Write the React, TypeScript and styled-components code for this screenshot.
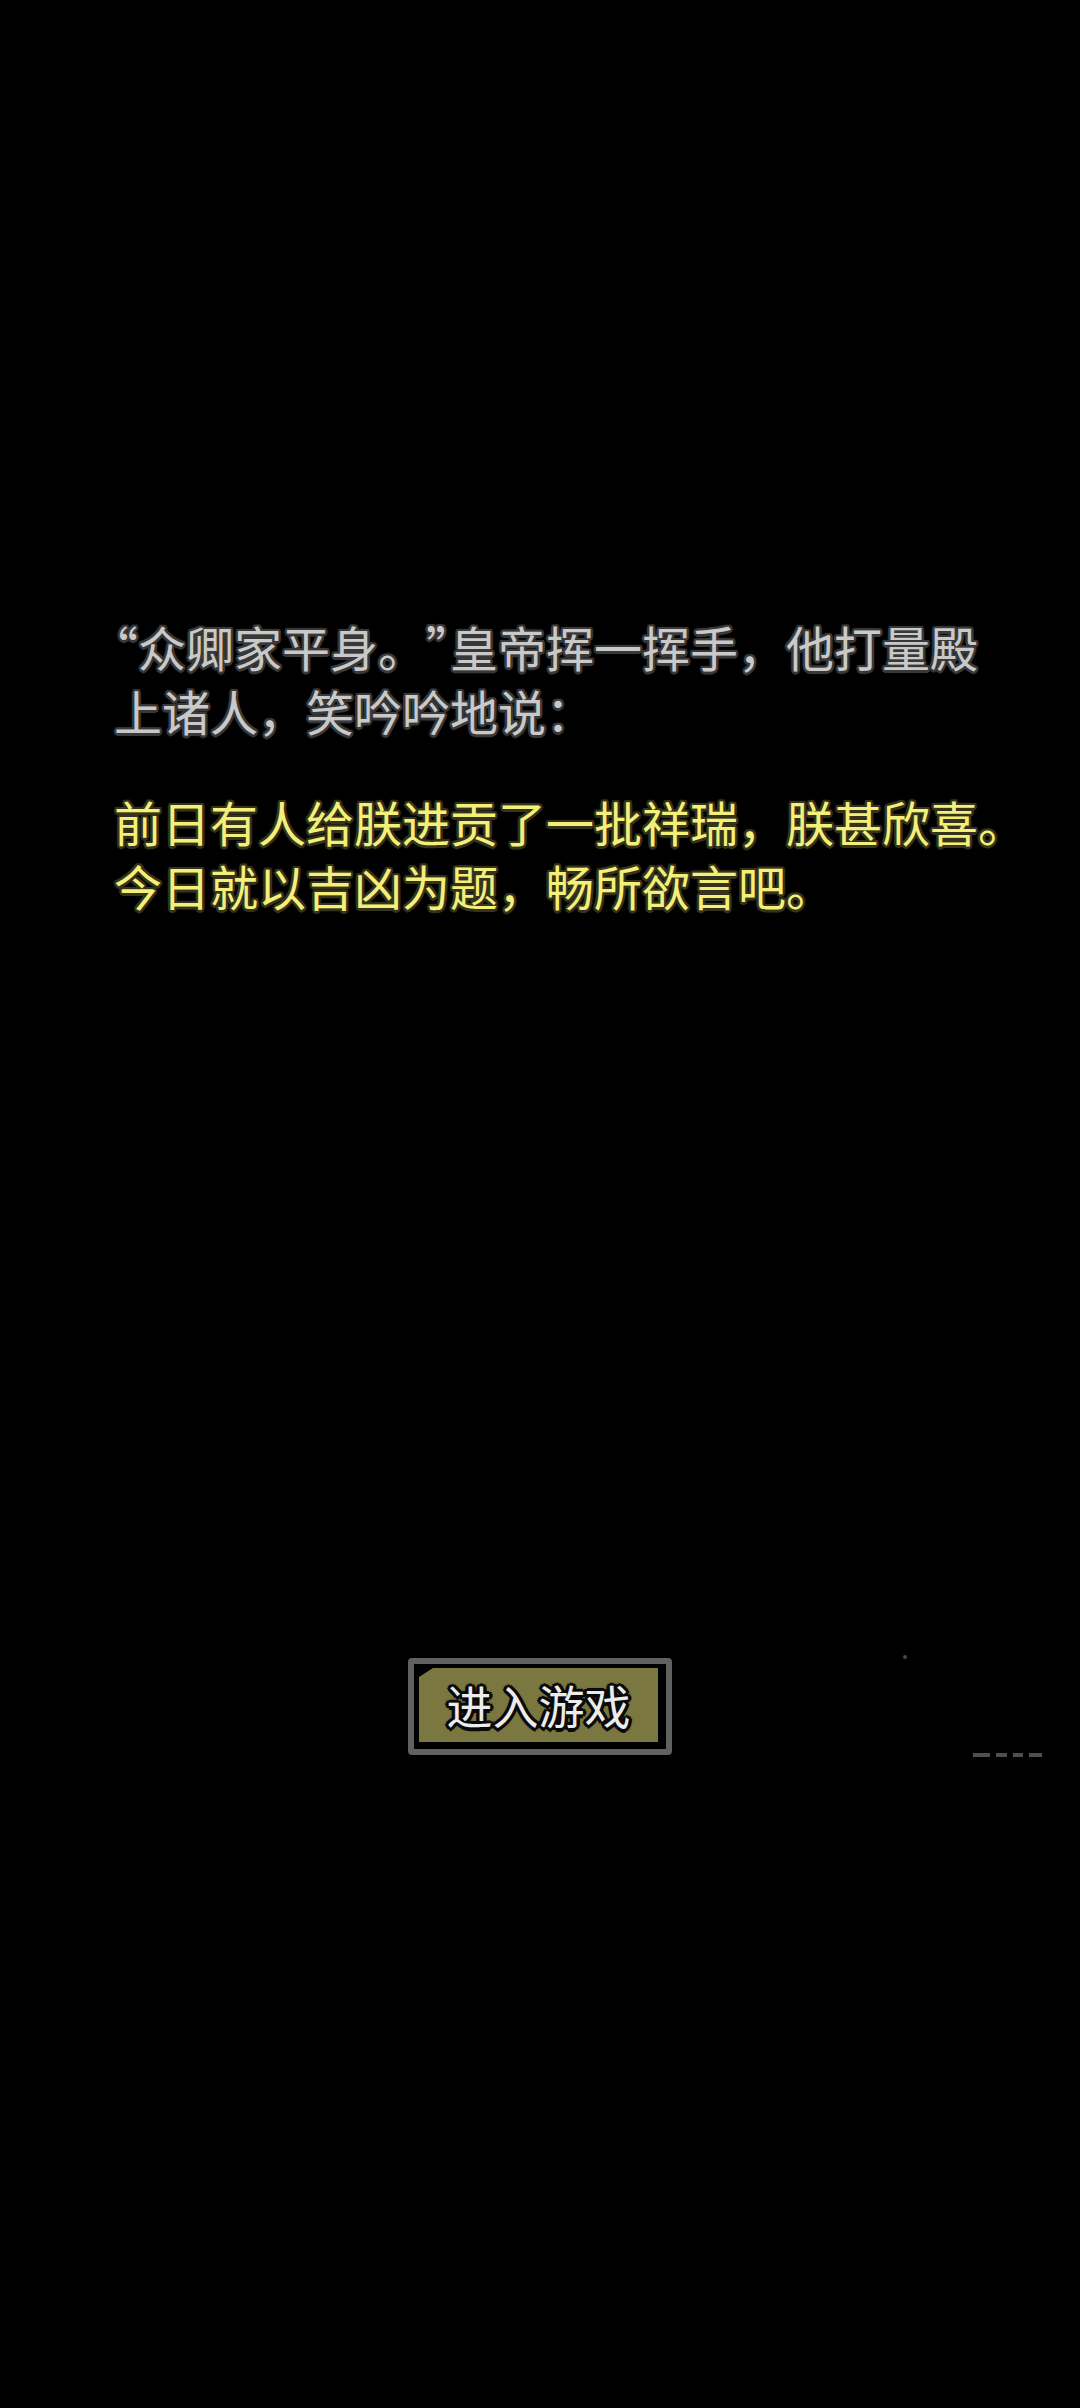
import styled, { createGlobalStyle } from "styled-components";

const GlobalStyle = createGlobalStyle`
  html, body {
    margin: 0;
    padding: 0;
    background: #000;
  }
  body {
    font-family: "Noto Sans CJK SC", "Noto Sans", sans-serif;
  }
`;

const Screen = styled.div`
  width: 1080px;
  height: 2408px;
  background: #000;
  display: flex;
  flex-direction: column;
  overflow: hidden;
`;

const Story = styled.div`
  width: 930px;
  padding: 614px 0 0 114px;
  display: flex;
  flex-direction: column;
  gap: 47px;
`;

const outline = (c: string, r: number) =>
  [
    `${r}px 0 0 ${c}`,
    `-${r}px 0 0 ${c}`,
    `0 ${r}px 0 ${c}`,
    `0 -${r}px 0 ${c}`,
    `${r * 0.7}px ${r * 0.7}px 0 ${c}`,
    `-${r * 0.7}px ${r * 0.7}px 0 ${c}`,
    `${r * 0.7}px -${r * 0.7}px 0 ${c}`,
    `-${r * 0.7}px -${r * 0.7}px 0 ${c}`,
    `0 0 4px ${c}`,
  ].join(", ");

const Line = styled.p<{ $tone: "narration" | "speech" }>`
  margin: 0;
  font-size: 48px;
  line-height: 64px;
  text-spacing-trim: space-all;
  color: ${(p) => (p.$tone === "speech" ? "#f3ef78" : "#c9c9c9")};
  text-shadow: ${(p) =>
    p.$tone === "speech" ? outline("#35331c", 2.5) : outline("#383838", 2.5)};
`;

/* the reference sets the quote marks at half width */
const Quote = styled.span`
  font-feature-settings: "halt" 1;
`;

const ButtonRow = styled.div`
  position: relative;
  margin-top: 741px;
  display: flex;
  padding-left: 408px;
`;

const EnterButton = styled.button`
  width: 264px;
  height: 97px;
  padding: 0;
  border: 6px solid #616161;
  border-radius: 4px;
  background: #000;
  display: flex;
  align-items: stretch;
  justify-content: stretch;
  box-sizing: border-box;
  cursor: pointer;
  font-family: inherit;
`;

const ButtonFace = styled.span`
  flex: 1;
  margin: 4px 8px 7px 5px;
  background: #7b7740;
  clip-path: polygon(14px 0, 100% 0, 100% 100%, 0 100%, 0 9px);
  display: flex;
  align-items: center;
  justify-content: center;
  font-size: 46px;
  line-height: 1;
  color: #ececec;
  padding-bottom: 2px;
  text-shadow: ${outline("#0a0a0a", 3.5)};
`;

const Speck = styled.span`
  position: absolute;
  left: 903px;
  top: -3px;
  width: 4px;
  height: 4px;
  border-radius: 50%;
  background: #4a4a4a;
`;

const Dashes = styled.div`
  position: absolute;
  left: 973px;
  top: 95px;
  display: flex;
  gap: 6px;
`;

const Dash = styled.span<{ $w: number }>`
  width: ${(p) => p.$w}px;
  height: 4px;
  background: #4f4f4f;
`;

export default function App() {
  return (
    <Screen>
      <GlobalStyle />
      <Story>
        <Line $tone="narration">
          <Quote>“</Quote>众卿家平身。<Quote>”</Quote>
          皇帝挥一挥手，他打量殿
          <br />
          上诸人，笑吟吟地说：
        </Line>
        <Line $tone="speech">
          前日有人给朕进贡了一批祥瑞，朕甚欣喜。今日就以吉凶为题，畅所欲言吧。
        </Line>
      </Story>
      <ButtonRow>
        <EnterButton>
          <ButtonFace>进入游戏</ButtonFace>
        </EnterButton>
        <Speck />
        <Dashes>
          {[17, 11, 10, 13].map((w, i) => (
            <Dash key={i} $w={w} />
          ))}
        </Dashes>
      </ButtonRow>
    </Screen>
  );
}
